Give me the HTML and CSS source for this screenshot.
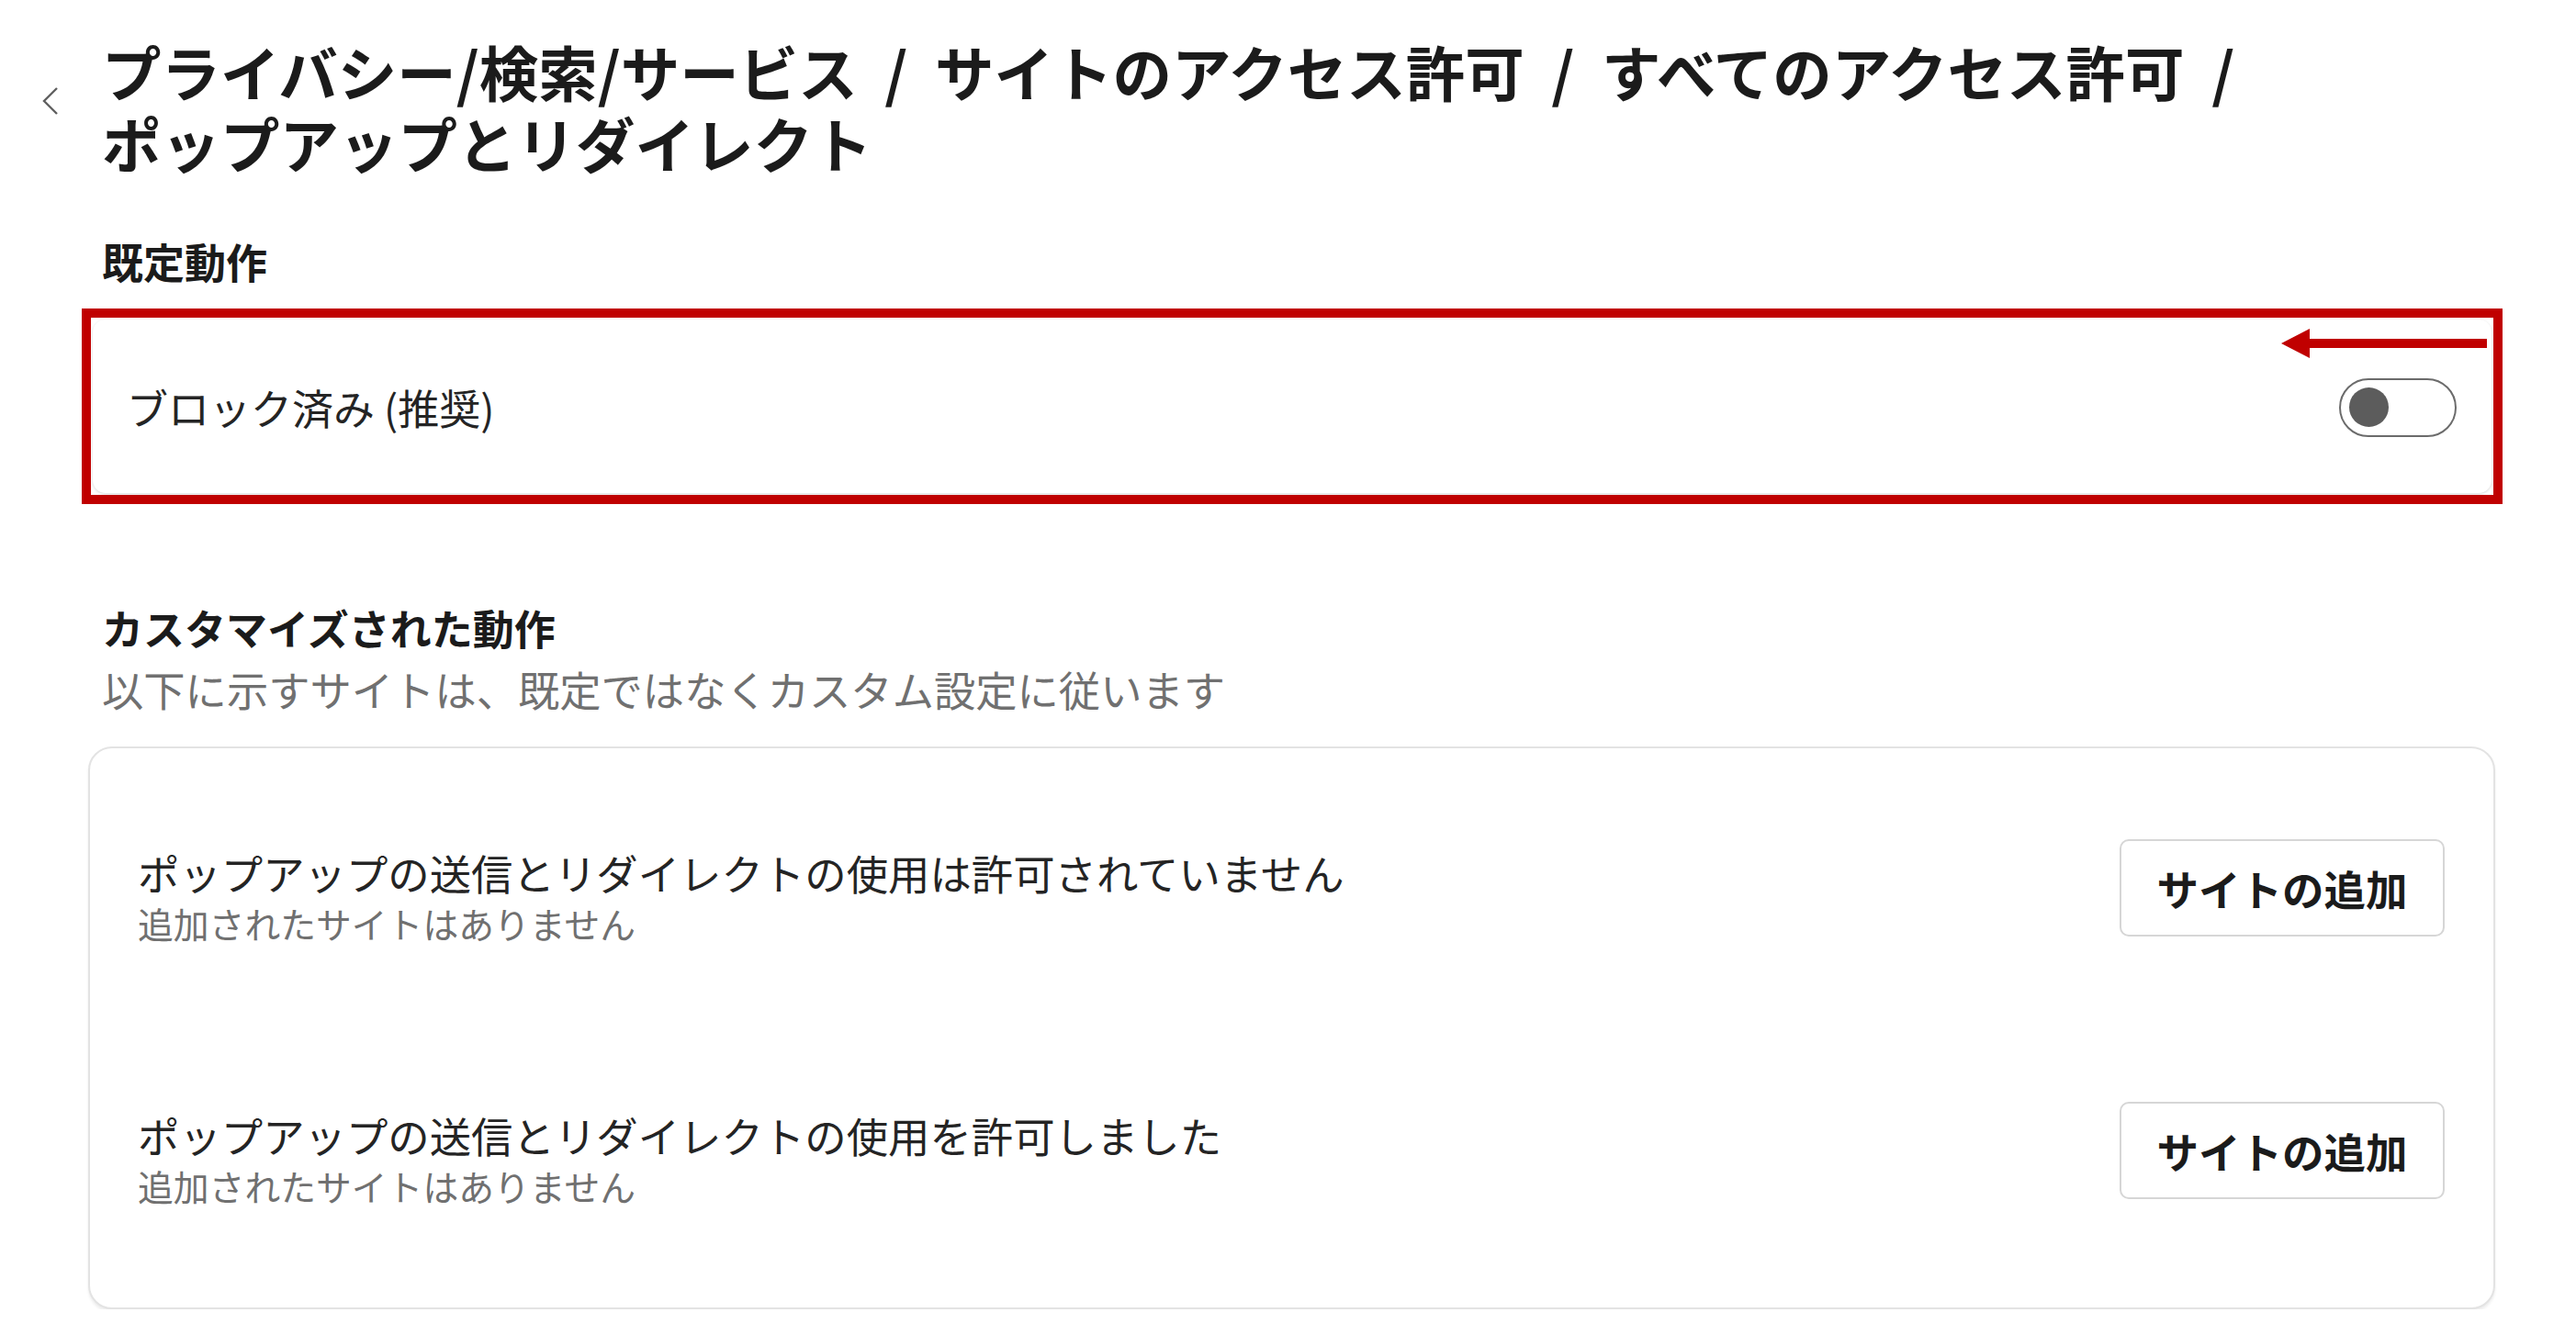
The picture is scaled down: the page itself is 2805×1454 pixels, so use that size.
FILE: index.html
```html
<!DOCTYPE html>
<html lang="ja">
<head>
    <meta charset="UTF-8">
    <meta name="viewport" content="width=device-width, initial-scale=1.0">
    <title>ポップアップとリダイレクト</title>
    <link rel="stylesheet" href="styles.css">
</head>
<body>
    <header class="page-header">
        <a class="back" href="#" aria-label="戻る">
            <svg width="18" height="30" viewBox="0 0 18 30"><polyline points="16,1 2,15 16,29" fill="none" stroke="#606060" stroke-width="2.4"/></svg>
        </a>
        <h1 class="crumbs"><span>プライバシー/検索/サービス</span> / <span>サイトのアクセス許可</span> / <span>すべてのアクセス許可</span> / <span>ポップアップとリダイレクト</span></h1>
    </header>

    <div class="content">
        <section>
            <h2 class="section-title">既定動作</h2>
            <div class="highlight">
                <div class="card setting">
                    <span class="setting-label">ブロック済み (推奨)</span>
                    <span class="toggle"><span class="knob"></span></span>
                </div>
                <!-- annotation arrow -->
                <svg class="arrow" width="224" height="34" viewBox="0 0 224 34">
                    <rect x="28" y="12" width="196" height="10" fill="#c00000"/>
                    <polygon points="0,17 31,1 31,33" fill="#c00000"/>
                </svg>
            </div>
        </section>

        <section class="custom">
            <h2 class="section-title">カスタマイズされた動作</h2>
            <p class="section-desc">以下に示すサイトは、既定ではなくカスタム設定に従います</p>
            <div class="card site-list">
                <div class="site-row">
                    <div class="site-text">
                        <div class="site-title">ポップアップの送信とリダイレクトの使用は許可されていません</div>
                        <div class="site-sub">追加されたサイトはありません</div>
                    </div>
                    <button class="button">サイトの追加</button>
                </div>
                <div class="site-row">
                    <div class="site-text">
                        <div class="site-title">ポップアップの送信とリダイレクトの使用を許可しました</div>
                        <div class="site-sub">追加されたサイトはありません</div>
                    </div>
                    <button class="button">サイトの追加</button>
                </div>
            </div>
        </section>
    </div>
</body>
</html>
```

FILE: styles.css
```css
body {
    font-family: "Noto Sans CJK JP", "Noto Sans", sans-serif;
    background-color: #fff;
    color: #1b1b1b;
    margin: 0;
    padding: 0;
}
.page-header {
    display: flex;
    align-items: flex-start;
    padding-top: 38px;
}
.back {
    display: block;
    margin: 57px 47px 0 46px;
    line-height: 0;
}
.crumbs {
    margin: 0;
    font-size: 64.5px;
    line-height: 78px;
    font-weight: 700;
    word-spacing: 15px;
    width: 2560px;
}
.crumbs span {
    white-space: nowrap;
    word-spacing: 0;
}
.content {
    margin-left: 96px;
    width: 2621px;
}
.section-title {
    margin: 61px 0 0;
    padding-left: 15px;
    font-size: 45px;
    line-height: 60px;
    font-weight: 700;
}
.highlight {
    position: relative;
    margin: 21px -8px 0 -7px;
    border: 10px solid #c00000;
    padding: 2px;
}
.arrow {
    position: absolute;
    right: 7px;
    top: 11px;
}
.card {
    background: #fff;
    border-radius: 14px;
    box-shadow: 0 1px 3px rgba(0, 0, 0, 0.16);
}
.setting {
    display: flex;
    align-items: center;
    justify-content: space-between;
    height: 189px;
    padding: 2px 38px 0 37px;
    box-sizing: border-box;
}
.setting-label {
    font-size: 45px;
    color: #242424;
}
.toggle {
    display: flex;
    align-items: center;
    width: 128px;
    height: 64px;
    box-sizing: border-box;
    border: 2px solid #6b6b6b;
    border-radius: 32px;
    padding-left: 9px;
}
.knob {
    width: 43px;
    height: 43px;
    border-radius: 50%;
    background: #5c5c5c;
}
.custom .section-title {
    margin-top: 105px;
}
.section-desc {
    margin: 6px 0 0;
    padding-left: 15px;
    font-size: 45.3px;
    line-height: 60px;
    color: #707070;
}
.site-list {
    margin-top: 33px;
    border: 2px solid #e3e3e3;
    border-radius: 26px;
    box-shadow: 0 3px 3px rgba(0, 0, 0, 0.07);
    padding: 99px 53px 106px 52px;
    display: flex;
    flex-direction: column;
    gap: 168px;
}
.site-row {
    display: flex;
    align-items: flex-start;
    justify-content: space-between;
}
.site-text {
    margin-top: 8px;
}
.site-title {
    font-size: 45.4px;
    line-height: 56px;
    color: #242424;
}
.site-sub {
    font-size: 38.8px;
    line-height: 54px;
    color: #707070;
}
.button {
    width: 354px;
    height: 106px;
    background: #fff;
    border: 2px solid #d6d6d6;
    border-radius: 10px;
    font-family: "Noto Sans CJK JP", sans-serif;
    font-size: 45.5px;
    font-weight: 700;
    color: #1b1b1b;
    cursor: pointer;
}
```
